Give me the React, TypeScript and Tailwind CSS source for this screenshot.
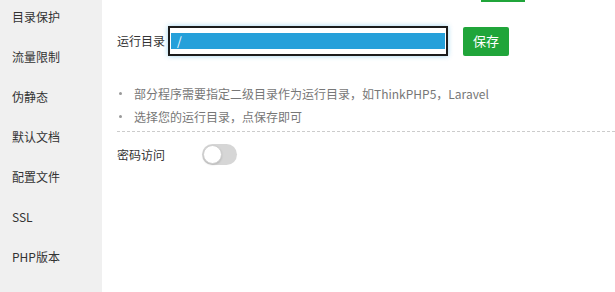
import React from 'react';

const menu = ['目录保护', '流量限制', '伪静态', '默认文档', '配置文件', 'SSL', 'PHP版本'];

const App = () => {
  const font = "font-['Noto_Sans_CJK_SC','Microsoft_YaHei',sans-serif]";

  return (
    <div className={`flex w-[615px] h-[292px] overflow-hidden bg-white ${font}`}>
      <div className="w-[102px] shrink-0 bg-[#f0f0f0]">
        <div className="-mt-[3px]">
          {menu.map((item) => (
            <div key={item} className="h-10 flex items-center pl-3 text-[12px] text-[#333]">
              {item}
            </div>
          ))}
        </div>
      </div>
      <div className="flex-1">
        <div className="h-[2px] w-[44px] ml-[379px] bg-[#20a53a]" />
        <div className="flex items-center pl-[15px] mt-[24px]">
          <span className="text-[12px] text-[#333] w-[51px]">运行目录</span>
          <div className="w-[280px] h-[30px] border-2 border-[#1c1c1c] bg-white flex items-center px-[1px] shadow-[0_0_5px_rgba(38,160,218,0.45)]">
            <div className="w-full h-[16px] bg-[#25a0da] text-white text-[12px] leading-[16px] pl-[6px]">/</div>
          </div>
          <button className="ml-[15px] w-[46px] h-[29px] rounded-[2px] bg-[#20a53a] text-white text-[13px]">
            保存
          </button>
        </div>
        <ul className="mt-[26px] pl-[15px] text-[12px] text-[#777]">
          <li className="flex items-center h-[23px]">
            <span className="w-[3px] h-[3px] ml-[2px] mr-[12px] rounded-full bg-[#999]" />
            部分程序需要指定二级目录作为运行目录，如ThinkPHP5，Laravel
          </li>
          <li className="flex items-center h-[23px]">
            <span className="w-[3px] h-[3px] ml-[2px] mr-[12px] rounded-full bg-[#999]" />
            选择您的运行目录，点保存即可
          </li>
        </ul>
        <div className="ml-[15px] mt-[3px] border-t border-dashed border-[#ccc]" />
        <div className="flex items-center pl-[15px] mt-[12px]">
          <span className="text-[12px] text-[#333] w-[85px]">密码访问</span>
          <div className="w-[35px] h-[21px] rounded-full bg-[#d6d6d6] flex items-center p-[1px]">
            <div className="w-[19px] h-[19px] rounded-full bg-white border border-[#cfcfcf] shadow-[0_1px_2px_rgba(0,0,0,0.15)]" />
          </div>
        </div>
      </div>
    </div>
  );
};

export default App;
